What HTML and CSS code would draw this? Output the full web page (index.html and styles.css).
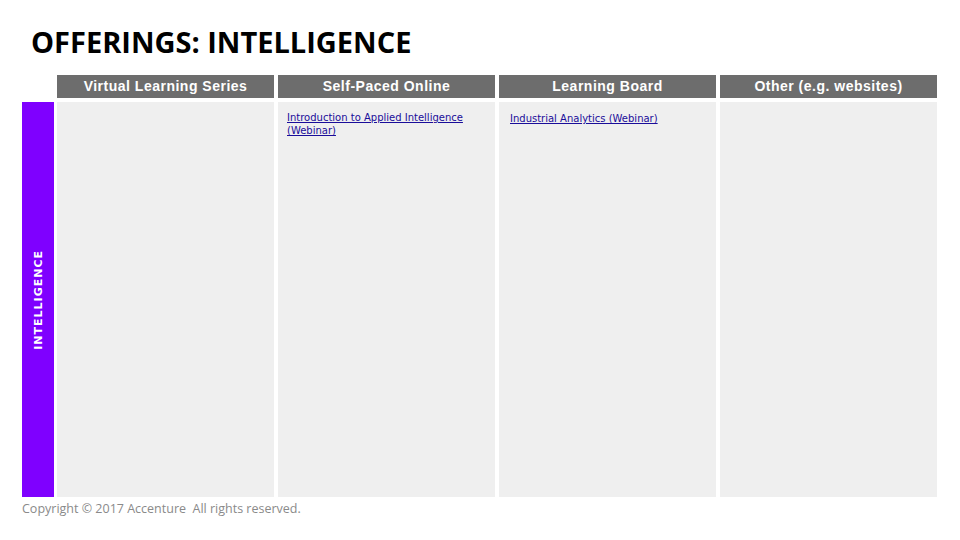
FILE: index.html
```html
<!DOCTYPE html>
<html>
<head>
<meta charset="utf-8">
<link rel="stylesheet" href="styles.css">
</head>
<body>
<div class="slide">
  <h1 class="title">OFFERINGS: INTELLIGENCE</h1>
  <div class="grid">
    <div class="corner"></div>
    <div class="head">Virtual Learning Series</div>
    <div class="head">Self-Paced Online</div>
    <div class="head">Learning Board</div>
    <div class="head">Other (e.g. websites)</div>
    <div class="side"><span class="side-label">INTELLIGENCE</span></div>
    <div class="cell"></div>
    <div class="cell cell-a"><a href="#" class="link">Introduction to Applied Intelligence (Webinar)</a></div>
    <div class="cell cell-b"><a href="#" class="link">Industrial Analytics (Webinar)</a></div>
    <div class="cell"></div>
  </div>
  <div class="copy">Copyright © 2017 Accenture &nbsp;All rights reserved.</div>
</div>
</body>
</html>
```
FILE: styles.css
```css
html, body {
  margin: 0;
  padding: 0;
  background: #ffffff;
}
.slide {
  width: 960px;
  height: 540px;
  overflow: hidden;
  display: flex;
  flex-direction: column;
}
.title {
  margin: 0;
  padding: 23px 0 0 31px;
  height: 51px;
  box-sizing: border-box;
  font-family: "Open Sans", "Liberation Sans", sans-serif;
  font-weight: 700;
  font-size: 29px;
  line-height: 38px;
  letter-spacing: 0;
  color: #000;
}
.grid {
  margin-top: 24px;
  padding-left: 22px;
  display: grid;
  grid-template-columns: 31px 217px 217px 217px 217px;
  grid-template-rows: 23px 395px;
  column-gap: 4px;
  row-gap: 4px;
}
.head {
  background: #6d6d6d;
  color: #fff;
  font-family: "Liberation Sans", Arial, sans-serif;
  font-weight: 700;
  font-size: 14px;
  line-height: 23px;
  text-align: center;
  letter-spacing: 0.5px;
}
.side {
  background: #7f00ff;
  margin-right: -1px;
  display: flex;
  align-items: center;
  justify-content: center;
}
.side-label {
  writing-mode: vertical-rl;
  transform: rotate(180deg);
  color: #fff;
  font-family: "DejaVu Sans", sans-serif;
  font-weight: 700;
  font-size: 11px;
  letter-spacing: 1px;
}
.cell {
  background: #efefef;
}
.cell-a { padding: 9px 9px; }
.cell-b { padding: 10px 11px; }
.link {
  display: block;
  font-family: "DejaVu Sans", Verdana, sans-serif;
  font-size: 10px;
  line-height: 13px;
  color: #1a0d9a;
  text-decoration: underline;
  width: 190px;
}
.copy {
  padding: 4px 0 0 22px;
  font-family: "Open Sans", "Liberation Sans", sans-serif;
  font-size: 12.5px;
  line-height: 16px;
  color: #8a8a8a;
}
```
